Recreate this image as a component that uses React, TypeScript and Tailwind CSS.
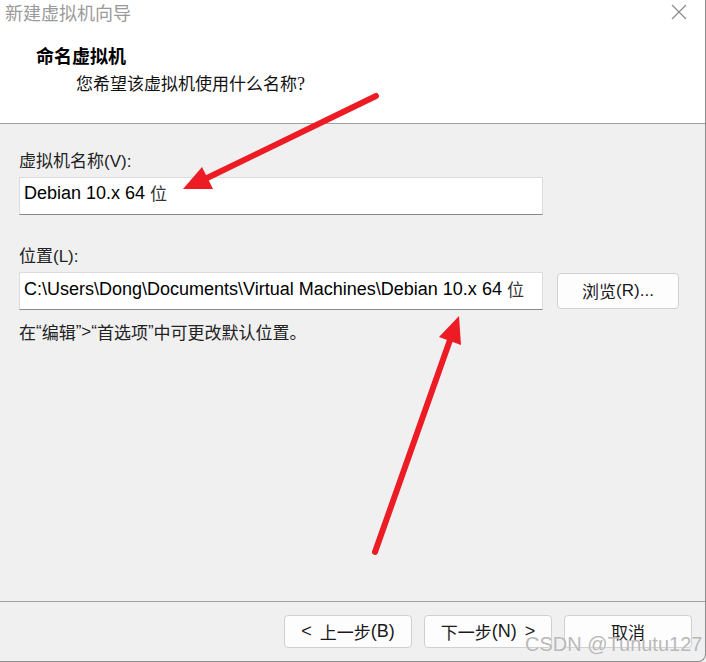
import React from "react";

function Btn({ children }: { children: React.ReactNode }) {
  return (
    <div className="h-[33px] w-[128px] rounded-[4px] border border-[#d0d0d0] bg-[#fdfdfd] flex items-center justify-center text-[17px] text-[#1a1a1a]">
      {children}
    </div>
  );
}

export default function App() {
  return (
    <div className="relative w-[706px] h-[662px] overflow-hidden bg-[#f0f0f0] font-['Noto_Sans_CJK_SC',sans-serif]">
      <div className="w-[706px] h-[662px] flex flex-col border-r border-b border-[#8c8c8c] rounded-br-[8px] bg-[#f0f0f0] overflow-hidden">
        {/* header */}
        <div className="h-[124px] bg-white border-b border-[#a0a0a0] flex flex-col shrink-0">
          <div className="h-[24px] flex items-start justify-between pl-[5px] pr-[18px]">
            <span className="h-[24px] text-[18px] leading-[24px] text-[#9a9a9a]">新建虚拟机向导</span>
            <svg width="16" height="16" viewBox="0 0 16 16" className="mt-[4px]">
              <path d="M1 1 L15 15 M15 1 L1 15" stroke="#8a8a8a" strokeWidth="1.2" fill="none" />
            </svg>
          </div>
          <div className="mt-[19px] h-[24px] pl-[36px] text-[18px] leading-[24px] font-bold text-black">命名虚拟机</div>
          <div className="mt-[4px] h-[24px] pl-[76px] text-[17px] leading-[24px] text-[#111]">
            您希望该虚拟机使用什么名称<span className="font-['Liberation_Serif',serif] text-[18px]">?</span>
          </div>
        </div>

        {/* body */}
        <div className="flex-1 flex flex-col px-[19px] pt-[24px]">
          <div className="h-[24px] text-[17px] leading-[24px] text-[#222]">
            虚拟机名称<span className="font-['Liberation_Sans',sans-serif]">(V):</span>
          </div>
          <div className="mt-[5px] w-[524px] h-[38px] bg-white border border-[#dcdcdc] border-b-[#8a8a8a] flex items-center pl-[4px] pb-[6px] text-[18px] leading-[24px] text-black font-['Liberation_Sans','Noto_Sans_CJK_SC',sans-serif]">
            Debian 10.x 64 <span className="ml-[5px] text-[17px] font-['Noto_Sans_CJK_SC',sans-serif] text-[#333]">位</span>
          </div>
          <div className="mt-[28px] h-[24px] text-[17px] leading-[24px] text-[#222]">
            位置<span className="font-['Liberation_Sans',sans-serif]">(L):</span>
          </div>
          <div className="mt-[5px] flex items-center gap-[14px]">
            <div className="w-[524px] h-[38px] bg-white border border-[#dcdcdc] border-b-[#8a8a8a] flex items-center pl-[4px] pb-[5px] text-[18px] leading-[24px] text-black whitespace-nowrap overflow-hidden font-['Liberation_Sans','Noto_Sans_CJK_SC',sans-serif]">
              C:\Users\Dong\Documents\Virtual Machines\Debian 10.x 64{" "}
              <span className="ml-[5px] text-[17px] font-['Noto_Sans_CJK_SC',sans-serif] text-[#333]">位</span>
            </div>
            <div className="w-[122px] h-[36px] rounded-[4px] border border-[#d0d0d0] bg-[#fdfdfd] flex items-center justify-center text-[17px] leading-[24px] text-[#1a1a1a]">
              浏览<span className="font-['Liberation_Sans',sans-serif]">(R)...</span>
            </div>
          </div>
          <div className="mt-[10px] h-[24px] text-[17px] leading-[24px] text-[#222] flex items-center">
            在<span className="font-['Liberation_Sans',sans-serif]">“</span>编辑
            <span className="font-['Liberation_Sans',sans-serif]">”&gt;“</span>首选项
            <span className="font-['Liberation_Sans',sans-serif]">”</span>中可更改默认位置。
          </div>
        </div>

        {/* footer */}
        <div className="h-[60px] shrink-0 border-t border-[#a0a0a0] flex justify-end gap-[12px] pr-[13px] pt-[13px]">
          <Btn>
            <span className="font-['Liberation_Sans',sans-serif] text-[18px]">&lt;</span>
            <span className="ml-[8px]">上一步</span>
            <span className="font-['Liberation_Sans',sans-serif] text-[18px]">(B)</span>
          </Btn>
          <Btn>
            <span>下一步</span>
            <span className="font-['Liberation_Sans',sans-serif] text-[18px]">(N)</span>
            <span className="ml-[8px] font-['Liberation_Sans',sans-serif] text-[18px]">&gt;</span>
          </Btn>
          <Btn>取消</Btn>
        </div>
      </div>

      {/* annotation arrows */}
      <svg className="absolute left-0 top-0 pointer-events-none" width="706" height="662" viewBox="0 0 706 662">
        <line x1="376" y1="96" x2="205" y2="179" stroke="#ed1c24" strokeWidth="6" strokeLinecap="round" />
        <polygon points="183,189 202,167 213,189" fill="#ed1c24" />
        <line x1="375" y1="552" x2="450" y2="340" stroke="#ed1c24" strokeWidth="6" strokeLinecap="round" />
        <polygon points="459,316 439,337 461,345" fill="#ed1c24" />
      </svg>

      {/* watermark */}
      <div className="absolute left-[525px] top-[632px] text-[20px] leading-[24px] text-[#b8b8b8] whitespace-nowrap pointer-events-none font-['Liberation_Sans',sans-serif] [text-shadow:0_0_1px_rgba(255,255,255,0.9)]">
        CSDN @Tunutu127
      </div>
    </div>
  );
}
